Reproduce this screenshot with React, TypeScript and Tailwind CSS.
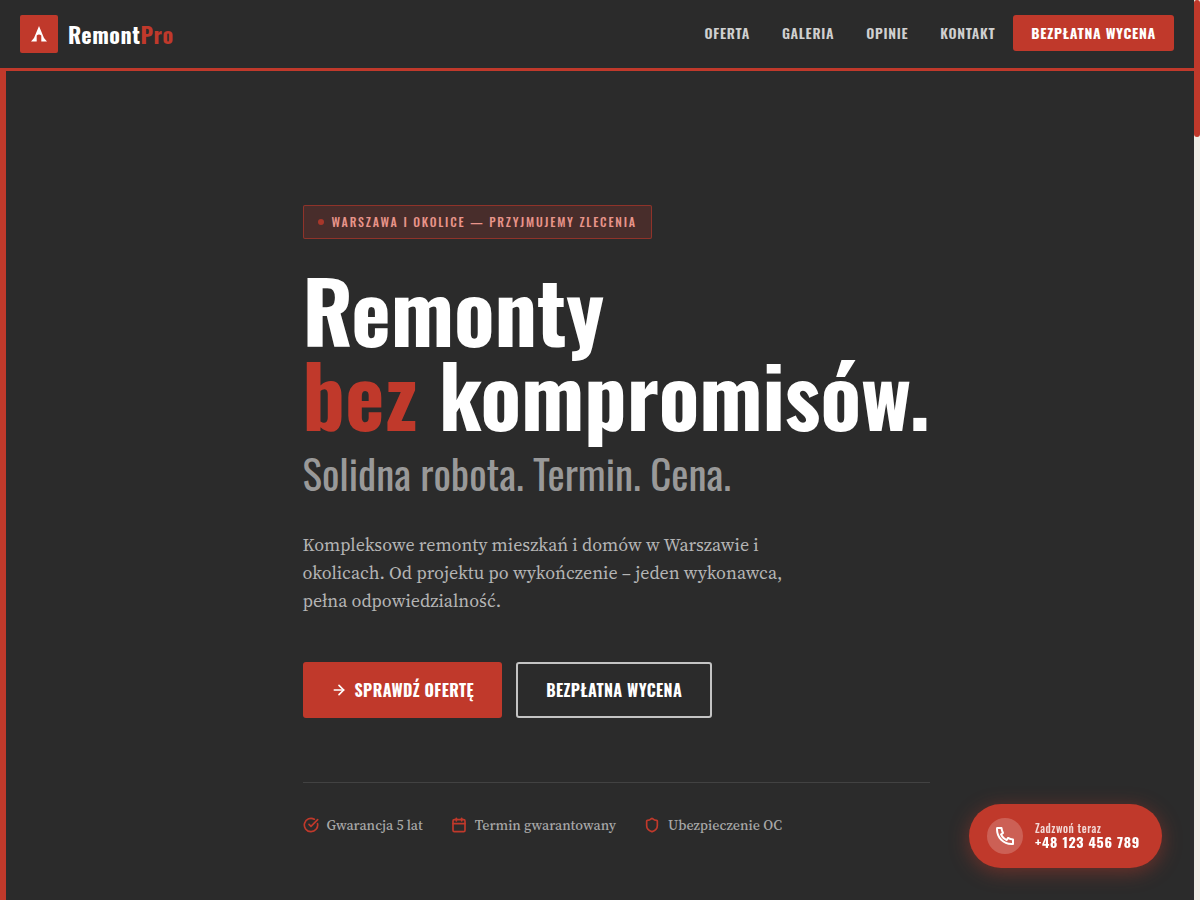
import React from 'react';
import { ArrowRight, Calendar, CircleCheckBig, Shield } from 'lucide-react';
import { RiPhoneLine } from 'react-icons/ri';

const navLinks = [
  { label: 'Oferta', href: '#oferta' },
  { label: 'Galeria', href: '#galeria' },
  { label: 'Opinie', href: '#opinie' },
  { label: 'Kontakt', href: '#kontakt' },
];

const trustItems = [
  { icon: CircleCheckBig, label: 'Gwarancja 5 lat' },
  { icon: Calendar, label: 'Termin gwarantowany' },
  { icon: Shield, label: 'Ubezpieczenie OC' },
];

const Header: React.FC = () => (
  <header className="flex items-start justify-between border-b-3 border-[#c0392b] bg-[#2b2b2b] px-5 py-[15px]">
    <a href="#top" className="flex items-center gap-2.5">
      <span className="flex size-[38px] items-center justify-center rounded-xs bg-[#c0392b]">
        <svg viewBox="0 0 16 16" className="size-4" fill="#fff" aria-hidden="true">
          <path d="M8 0 L13 12 L16 15.5 H10.3 V9.5 Q8 7.5 5.7 9.5 V15.5 H0 L3 12 Z" />
        </svg>
      </span>
      <span className="text-[22px] leading-8 font-bold tracking-wide text-white">
        Remont<span className="text-[#c0392b]">Pro</span>
      </span>
    </a>

    <nav className="flex items-center gap-8">
      {navLinks.map((link) => (
        <a key={link.href} href={link.href} className="text-sm font-semibold tracking-wider text-[#d0d0d0] uppercase">
          {link.label}
        </a>
      ))}
      <a
        href="#wycena"
        className="-ml-3.5 flex h-9 items-center rounded-[3px] bg-[#c0392b] px-[18px] text-sm font-bold tracking-wider text-white uppercase"
      >
        Bezpłatna wycena
      </a>
    </nav>
  </header>
);

const Hero: React.FC = () => (
  <main className="flex flex-1 justify-center border-l-6 border-[#c0392b] pt-[134px] pl-8">
    <div className="w-full max-w-[627px]">
      <div className="inline-flex h-[34px] items-center gap-2 rounded-xs border border-[#c0392b]/60 bg-[#c0392b]/20 px-3.5 text-xs font-medium tracking-[0.15em] text-[#e8948a] uppercase">
        <span className="size-1.5 rounded-full bg-[#c0392b]/80" />
        Warszawa i okolice — przyjmujemy zlecenia
      </div>

      <h1 className="mt-7 text-[84px] leading-[84px] font-bold whitespace-nowrap text-white">
        Remonty
        <br />
        <span className="text-[#c0392b]">bez</span> kompromisów.
        <span className="mt-3 block text-[41px] leading-[52px] font-normal text-[#999]">
          Solidna robota. Termin. Cena.
        </span>
      </h1>

      <p className="mt-8 max-w-[490px] font-['Source_Serif_4','Source_Serif_Pro','Noto_Serif','Liberation_Serif',serif] text-lg leading-7 text-[#b5b5b5]">
        Kompleksowe remonty mieszkań i domów w Warszawie i okolicach. Od projektu po wykończenie – jeden wykonawca,
        pełna odpowiedzialność.
      </p>

      <div className="mt-[47px] flex gap-3.5">
        <a
          href="#oferta"
          className="flex h-14 items-center gap-2 rounded-[3px] bg-[#c0392b] px-7 text-base font-bold tracking-wide text-white uppercase"
        >
          <ArrowRight size={16} strokeWidth={2.5} />
          Sprawdź ofertę
        </a>
        <a
          href="#wycena"
          className="flex h-14 items-center rounded-[3px] border-2 border-[#c4c4c4] px-7 text-base font-bold tracking-wide text-white uppercase"
        >
          Bezpłatna wycena
        </a>
      </div>

      <ul className="mt-16 flex gap-7 border-t border-[#424242] pt-8 font-['Source_Serif_4','Source_Serif_Pro','Noto_Serif','Liberation_Serif',serif] text-sm font-medium text-[#a8a8a8]">
        {trustItems.map(({ icon: Icon, label }) => (
          <li key={label} className="flex items-center gap-2">
            <Icon size={16} strokeWidth={2.5} className="text-[#c0392b]" />
            {label}
          </li>
        ))}
      </ul>
    </div>
  </main>
);

const App: React.FC = () => (
  <div id="top" className="flex min-h-screen bg-[#2b2b2b] font-['Oswald','Roboto_Condensed','Liberation_Sans_Narrow',sans-serif]">
    <div className="flex flex-1 flex-col">
      <Header />
      <Hero />
    </div>
    <div className="w-1.5 bg-[#f0ede6]">
      <div className="h-[137px] rounded-[3px] bg-[#c0392b]" />
    </div>

    <a
      href="tel:+48123456789"
      className="fixed right-[38px] bottom-8 flex h-16 items-center gap-3 rounded-full bg-[#c0392b] pr-[22px] pl-[18px] text-white shadow-[0_4px_20px_rgba(192,57,43,0.45)]"
    >
      <span className="flex size-9 items-center justify-center rounded-full bg-white/20">
        <RiPhoneLine size={24} />
      </span>
      <span>
        <span className="block text-[11px] leading-3 font-medium tracking-wider text-white/80">Zadzwoń teraz</span>
        <span className="block text-sm leading-4 font-bold tracking-wider">+48 123 456 789</span>
      </span>
    </a>
  </div>
);

export default App;
